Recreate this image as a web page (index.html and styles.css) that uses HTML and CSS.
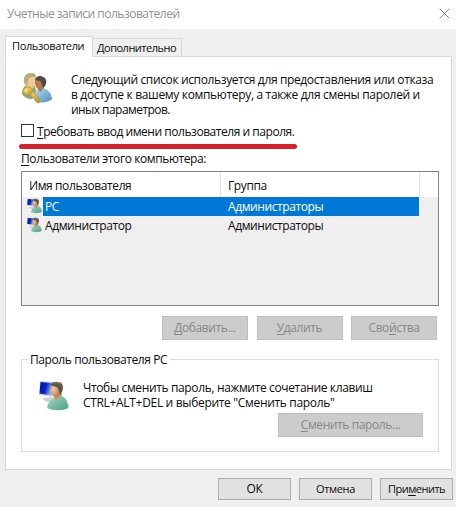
FILE: index.html
```html
<!DOCTYPE html>
<html lang="ru">
<head>
<meta charset="utf-8">
<title>Учетные записи пользователей</title>
<link rel="stylesheet" href="styles.css">
</head>
<body>
<svg class="defs" width="0" height="0" aria-hidden="true">
  <defs>
    <linearGradient id="screen" x1="0" y1="0" x2="1" y2="0.3"><stop offset="0" stop-color="#0712a0"/><stop offset=".55" stop-color="#0a20c8"/><stop offset="1" stop-color="#8fb4f0"/></linearGradient>
    <radialGradient id="skin" cx=".3" cy=".4" r=".8"><stop offset="0" stop-color="#f3c9a0"/><stop offset="1" stop-color="#a8703f"/></radialGradient>
    <linearGradient id="shirt" x1="0" y1="0" x2="1" y2="1"><stop offset="0" stop-color="#a5dcc4"/><stop offset="1" stop-color="#4b9f83"/></linearGradient>
    <linearGradient id="blue" x1="0" y1="0" x2="1" y2="1"><stop offset="0" stop-color="#b9dcf2"/><stop offset="1" stop-color="#4f8fbd"/></linearGradient>
    <linearGradient id="gold" x1="0" y1="0" x2="1" y2="1"><stop offset="0" stop-color="#ffe783"/><stop offset="1" stop-color="#c98a12"/></linearGradient>
    <symbol id="user" viewBox="0 0 32 32">
      <path d="M4 18l9-1 5 3-7 3-7-3z" fill="#cbd3d5"/>
      <path d="M1 1l13 1-1 15L0 15z" fill="#cddaea"/>
      <path d="M1.500 2l12 1-1 12.500L.5 13.500z" fill="url(#screen)"/>
      <path d="M25 23l5 1 .5 3-3 2z" fill="#c6cdcf"/>
      <path d="M8 28c1-6 4-9 9-11l6-1c4 2 6 6 6 12-5 3-15 3-21 0z" fill="url(#shirt)"/>
      <path d="M14 15l3 6 6-6-1-3h-6z" fill="#c99462"/>
      <ellipse cx="16.500" cy="10.500" rx="5.200" ry="6.500" fill="url(#skin)"/>
      <path d="M11 5c1-3 5-4 8-3 5 0 6 5 4 10l-2 3c-1-3-1-6-3-8-2-1-5-1-7-2z" fill="#5b5649"/>
      <path d="M13 3.500c3-1.500 7-1.500 8.500.5" fill="none" stroke="#8a887d"/>
    </symbol>
  </defs>
</svg>
<main class="dialog">
  <header class="titlebar">
    <span class="t-title">Учетные записи пользователей</span>
    <svg class="close" width="11" height="11" viewBox="0 0 11 11"><path d="M.7.7l9.600 9.600M10.300.7L.7 10.300" stroke="#8a8a8a" fill="none"/></svg>
  </header>
  <nav class="tabs">
    <div class="tab active"><span class="t-tab1">Пользователи</span></div>
    <div class="tab"><span class="t-tab2">Дополнительно</span></div>
  </nav>
  <section class="panel">
    <div class="intro">
      <svg class="people" width="32" height="32" viewBox="0 0 32 32">
        <path d="M1 22c0-6 3-9 7-10l6 2 2 9-5 4c-5 0-8-2-10-5z" fill="#82b070"/>
        <path d="M3 11C2 5 5 1 10 1c5 0 6 4 5 9l-3 7-6-1z" fill="#ddc98c"/>
        <ellipse cx="10.500" cy="9" rx="3.700" ry="5.500" fill="#efcaa0"/>
        <path d="M3 10C2 5 5 1 10 1c4 0 5 2 5 4-4-1-7 0-8 3l-1 6z" fill="#b7ad77"/>
        <path d="M13 28c-1-7 2-11 7-12 6 0 10 4 11 11-4 4-13 5-18 1z" fill="url(#blue)"/>
        <path d="M16 15l3 5 4-4-1-3z" fill="#a96b40"/>
        <ellipse cx="19" cy="11" rx="5" ry="6.500" fill="#b87b50"/>
        <path d="M14 8c1-4 5-5 8-3 4 1 4 6 2 9l-2 2-2-6c-1-2-4-1-6-2z" fill="#4c4948"/>
        <path d="M8 20l3-2 8 10-1 3-3-1-1-3-3-2z" fill="url(#gold)" stroke="#b77f1d" stroke-width=".5"/>
        <ellipse cx="7" cy="19" rx="4.500" ry="3.700" fill="url(#gold)" stroke="#c18f25" stroke-width=".7"/>
        <circle cx="5.500" cy="18.500" r="1" fill="#fff8cf"/>
      </svg>
      <p class="desc"><span class="t-d1">Следующий список используется для предоставления или отказа</span><br><span class="t-d2">в доступе к вашему компьютеру, а также для смены паролей и</span><br><span class="t-d3">иных параметров.</span></p>
    </div>
    <div class="check"><i class="box"></i><span class="t-check"><u>Т</u>ребовать ввод имени пользователя и пароля.</span></div>
    <div class="mark"></div>
    <div class="label"><span class="t-label"><u>П</u>ользователи этого компьютера:</span></div>
    <div class="list">
      <div class="row head"><div class="name"><span class="t-name">Имя пользователя</span></div><div class="group"><span class="t-group">Группа</span></div></div>
      <div class="row selected"><svg class="mini" width="16" height="16"><use href="#user"/></svg><div class="name"><span class="t-pc">PC</span></div><div class="group"><span class="t-admins">Администраторы</span></div></div>
      <div class="row"><svg class="mini" width="16" height="16"><use href="#user"/></svg><div class="name"><span class="t-admin">Администратор</span></div><div class="group"><span class="t-admins">Администраторы</span></div></div>
    </div>
    <div class="actions">
      <div class="btn disabled"><span class="t-add"><u>Д</u>обавить...</span></div>
      <div class="btn disabled"><span class="t-del"><u>У</u>далить</span></div>
      <div class="btn disabled"><span class="t-prop">Сво<u>й</u>ства</span></div>
    </div>
    <div class="password">
      <div class="legend"><span class="t-legend">Пароль пользователя PC</span></div>
      <div class="hint">
        <svg class="avatar" width="32" height="32"><use href="#user"/></svg>
        <p><span class="t-h1">Чтобы сменить пароль, нажмите сочетание клавиш</span><br><span class="t-h2">CTRL+ALT+DEL и выберите "Сменить пароль"</span></p>
      </div>
      <div class="btn disabled change"><span class="t-change"><u>С</u>менить пароль...</span></div>
    </div>
  </section>
  <footer class="footer">
    <div class="btn"><span class="t-ok">ОК</span></div>
    <div class="btn"><span class="t-cancel">Отмена</span></div>
    <div class="btn"><span class="t-apply">При<u>м</u>енить</span></div>
  </footer>
</main>
</body>
</html>
```
FILE: styles.css
```css
* { box-sizing: border-box; }
body { margin: 0; background: #efefef; }
.defs { display: block; }
.dialog { width: 456px; height: 507px; overflow: hidden; background: #efefef; color: #0c0c0c; font: 12px/15px "Open Sans", "Noto Sans", sans-serif; letter-spacing: -0.4px; white-space: nowrap; }
p { margin: 0; }
u { text-decoration: underline; text-underline-offset: 1.5px; text-decoration-thickness: 1px; text-decoration-skip-ink: none; }
.titlebar { height: 29px; background: #fff; color: #929292; display: flex; justify-content: space-between; padding: 6px 6px 0 7px; }
.close { margin-top: 2px; }
.tabs { height: 27px; padding: 7px 0 0 5px; display: flex; align-items: flex-end; }
.tab { height: 18px; width: 89px; border: 1px solid #d9d9d9; border-bottom: 0; border-left: 0; padding: 1px 0 0 4px; }
.tab.active { height: 21px; width: 88px; margin-bottom: -1px; padding: 1px 0 0 6px; background: #fff; border-left: 1px solid #d9d9d9; position: relative; z-index: 1; }
.panel { width: 447px; height: 414px; margin-left: 5px; border: 1px solid #d9d9d9; background: #fff; padding: 15px 0 0 15px; }
.intro { display: flex; height: 52px; }
.people { flex: none; margin-right: 18px; }
.check { display: flex; height: 20px; }
.box { width: 13px; height: 13px; border: 1px solid #333; margin: 0 3px 0 0; }
.mark { width: 278px; height: 5px; border-radius: 3px; background: #d7202c; margin: 0 0 0 -2px; }
.label { height: 22px; padding-top: 2px; }
.list { width: 418px; height: 135px; border: 1px solid #828282; background: #efefef; }
.row { display: flex; height: 19px; width: 397px; line-height: 19px; }
.row .name { width: 178px; padding-left: 2px; }
.row .group { flex: 1; padding-left: 7px; }
.head { height: 25px; line-height: 27px; }
.list .head { width: auto; background: #fff; padding-right: 18px; }
.head .name { width: 199px; padding-left: 7px; border-right: 1px solid #e3e3e3; }
.head .group { border-right: 1px solid #e3e3e3; }
.mini { margin: 1px 0 0 5px; flex: none; }
.selected .name, .selected .group { background: #0078d7; color: #fff; }
.actions { display: flex; gap: 8.5px; margin: 10px 0 0 141px; }
.btn { height: 22px; width: 73px; border: 1px solid #adadad; background: #e1e1e1; text-align: center; line-height: 20px; }
.btn.disabled { width: 86px; height: 24px; background: #ccc; border-color: #bfbfbf; color: #888; line-height: 22px; }
.password { width: 418px; height: 93px; border: 1px solid #dcdcdc; margin-top: 19px; }
.legend { width: 142px; height: 15px; margin: -8px 0 0 6px; padding-left: 2px; background: #fff; }
.hint { display: flex; gap: 12px; padding: 13px 0 0 17px; height: 46px; }
.avatar { flex: none; }
.password .change { width: 145px; margin-left: 256px; }
.footer { display: flex; gap: 8px; margin: 8px 0 0 218px; }
.t-title { letter-spacing: -0.5px; }
.t-tab1, .t-tab2, .t-cancel, .t-apply { font-size: 11px; letter-spacing: -0.35px; }
.t-tab2 { letter-spacing: -0.5px; }
.t-apply { letter-spacing: -0.5px; }
.t-d1 { letter-spacing: -0.37px; }
.t-d2 { letter-spacing: -0.33px; }
.t-d3 { letter-spacing: -0.55px; }
.t-check { letter-spacing: -0.46px; }
.t-h1 { letter-spacing: -0.36px; }
.t-h2 { letter-spacing: -0.32px; }
```
